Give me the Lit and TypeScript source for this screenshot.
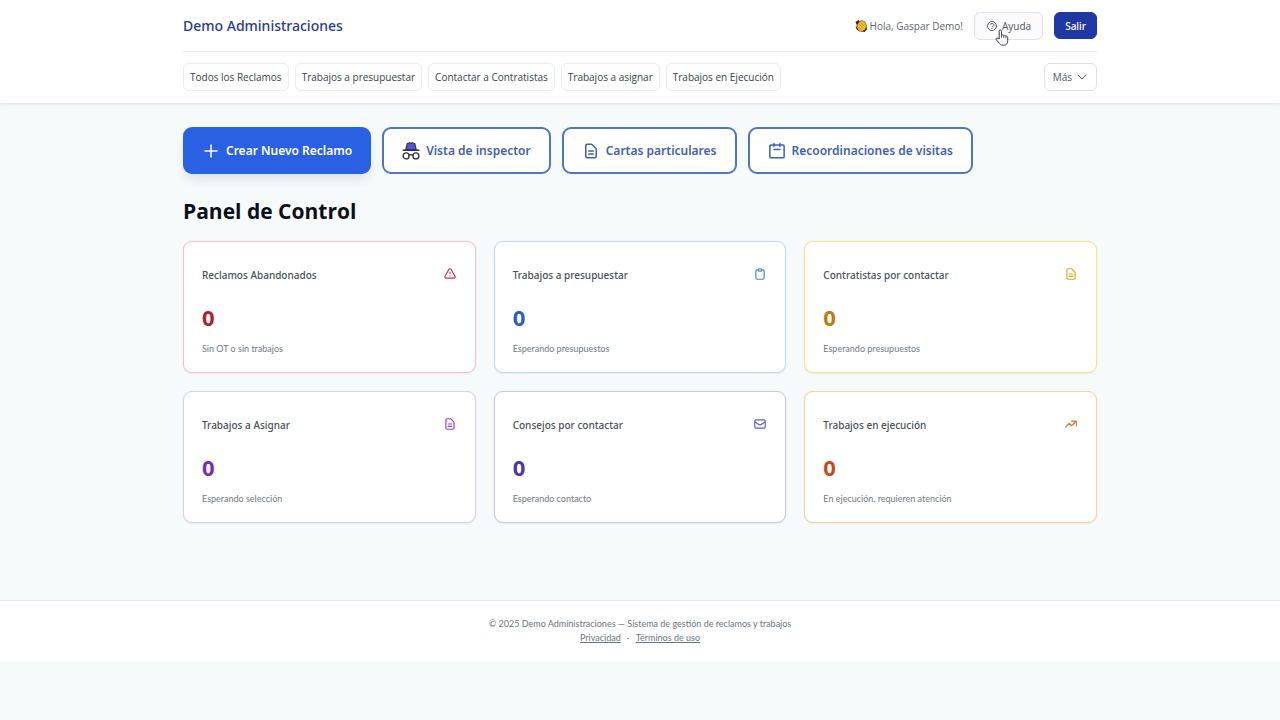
import { LitElement, html, css, svg } from "lit";
import { customElement } from "lit/decorators.js";

const icons = {
  warning: svg`<path d="M12 9v2m0 4h.01m-6.938 4h13.856c1.54 0 2.502-1.667 1.732-3L13.732 4c-.77-1.333-2.694-1.333-3.464 0L3.34 16c-.77 1.333.192 3 1.732 3z"/>`,
  clipboard: svg`<path d="M9 5H7a2 2 0 00-2 2v12a2 2 0 002 2h10a2 2 0 002-2V7a2 2 0 00-2-2h-2M9 5a2 2 0 002 2h2a2 2 0 002-2M9 5a2 2 0 012-2h2a2 2 0 012 2"/>`,
  document: svg`<path d="M9 12h6m-6 4h6m2 5H7a2 2 0 01-2-2V5a2 2 0 012-2h5.586a1 1 0 01.707.293l5.414 5.414a1 1 0 01.293.707V19a2 2 0 01-2 2z"/>`,
  mail: svg`<path d="M3 8l7.89 5.26a2 2 0 002.22 0L21 8M5 19h14a2 2 0 002-2V7a2 2 0 00-2-2H5a2 2 0 00-2 2v10a2 2 0 002 2z"/>`,
  trend: svg`<path d="M13 7h8m0 0v8m0-8l-8 8-4-4-6 6"/>`,
  plus: svg`<path d="M12 4v16m8-8H4"/>`,
  calendar: svg`<path d="M8 2v4m8-4v4M8 10h8M4 21h16a1.5 1.5 0 001.5-1.5v-14A1.5 1.5 0 0020 4H4a1.5 1.5 0 00-1.5 1.5v14A1.5 1.5 0 004 21z"/>`,
  help: svg`<path d="M8.228 9c.549-1.165 2.03-2 3.772-2 2.21 0 4 1.343 4 3 0 1.4-1.278 2.575-3.006 2.907-.542.104-.994.54-.994 1.093m0 3h.01M21 12a9 9 0 11-18 0 9 9 0 0118 0z"/>`,
  chevron: svg`<path d="M4 8l8 8 8-8"/>`,
};

const icon = (name: keyof typeof icons) =>
  html`<svg class="icon" viewBox="0 0 24 24" aria-hidden="true">${icons[name]}</svg>`;

const navLinks = [
  "Todos los Reclamos",
  "Trabajos a presupuestar",
  "Contactar a Contratistas",
  "Trabajos a asignar",
  "Trabajos en Ejecución",
];

const cards: { title: string; note: string; icon: keyof typeof icons; tone: string }[] = [
  { title: "Reclamos Abandonados", note: "Sin OT o sin trabajos", icon: "warning", tone: "red" },
  { title: "Trabajos a presupuestar", note: "Esperando presupuestos", icon: "clipboard", tone: "blue" },
  { title: "Contratistas por contactar", note: "Esperando presupuestos", icon: "document", tone: "yellow" },
  { title: "Trabajos a Asignar", note: "Esperando selección", icon: "document", tone: "purple" },
  { title: "Consejos por contactar", note: "Esperando contacto", icon: "mail", tone: "indigo" },
  { title: "Trabajos en ejecución", note: "En ejecución, requieren atención", icon: "trend", tone: "orange" },
];

@customElement("app-root")
export class AppRoot extends LitElement {
  static styles = css`
    :host {
      display: block;
      min-height: 100vh;
      background: #f7fafb;
      color: #0b0f19;
      font-family: "Open Sans", "Noto Sans", sans-serif;
      font-size: 10px;
      line-height: 14px;
    }
    * { box-sizing: border-box; }
    a { color: inherit; text-decoration: none; }
    button { font: inherit; cursor: pointer; }
    .wrap { max-width: 950px; margin: 0 auto; padding: 0 18px; }
    .icon {
      width: 14px;
      height: 14px;
      flex: none;
      fill: none;
      stroke: currentColor;
      stroke-width: 2;
      stroke-linecap: round;
      stroke-linejoin: round;
    }
    .brand, .exit, .action, .name { font-family: "Noto Sans", "Open Sans", sans-serif; }
    .header {
      background: #fff;
      box-shadow: 0 1px 3px rgba(30, 50, 60, 0.12);
    }
    .top {
      display: flex;
      align-items: center;
      justify-content: space-between;
      height: 52px;
      border-bottom: 1px solid #e9ebee;
    }
    .brand { color: #283c8f; font-size: 14px; line-height: 20px; font-weight: 500; }
    .account { display: flex; align-items: center; gap: 11px; }
    .hello { display: flex; align-items: center; gap: 3px; color: #5f646c; }
    .wave { width: 12px; height: 12px; }
    .btn {
      position: relative;
      display: flex;
      align-items: center;
      gap: 4px;
      height: 28px;
      padding: 0 11px;
      border: 1px solid #dfe1e6;
      border-radius: 6px;
      background: #fff;
      color: #51565e;
    }
    .btn .icon { width: 12px; height: 12px; }
    .help { background: #fafafc; }
    .exit { height: 27px; padding: 0 10px; border-color: #2038a3; background: #2038a3; color: #fff; font-weight: 500; }
    .more { padding: 0 8px; }
    .pointer {
      position: absolute;
      left: 20px;
      top: 16px;
      width: 14px;
      height: 17px;
    }
    .nav {
      display: flex;
      align-items: center;
      justify-content: space-between;
      padding: 11px 0 12px;
    }
    .links { display: flex; gap: 6px; }
    .link {
      height: 28px;
      padding: 6px;
      border: 1px solid #ececef;
      border-radius: 6px;
      background: #fefefe;
      color: #3a3f47;
    }
    .link, .btn { white-space: nowrap; }
    .actions { display: flex; flex-wrap: wrap; gap: 11px; padding-top: 24px; }
    .action {
      display: flex;
      align-items: center;
      gap: 6px;
      height: 47px;
      padding: 0 18px;
      border: 2px solid #5075c4;
      border-radius: 9px;
      background: #fff;
      color: #3f5fb2;
      font-size: 12px;
      line-height: 20px;
      font-weight: 600;
    }
    .action .icon { width: 18px; height: 18px; }
    .primary {
      padding: 0 17px;
      border-color: #2a60e2;
      background: #2a60e2;
      color: #fff;
      box-shadow: 0 7px 11px -2px rgba(20, 30, 50, 0.12);
    }
    .title { margin: 22px 0 14px; font-size: 21px; line-height: 31px; font-weight: 700; }
    .grid { display: grid; grid-template-columns: repeat(3, 1fr); gap: 18px; }
    .card {
      height: 132px;
      padding: 25px 18px 0;
      border: 1px solid var(--line);
      border-radius: 9px;
      background: #fff;
      box-shadow: 0 0 1px var(--line), 0 1px 2px rgba(0, 0, 0, 0.05);
    }
    .head { display: flex; align-items: flex-start; justify-content: space-between; height: 17px; }
    .name { margin: 0; color: #4a5058; font-size: 10px; line-height: 17px; font-weight: 500; }
    .head .icon { color: var(--mark); }
    .count { margin: 20px 0 0; color: var(--ink); font-size: 22px; line-height: 26px; font-weight: 700; }
    .note { margin: 13px 0 0; color: #71777f; font-family: "Lato", sans-serif; font-size: 9px; line-height: 12px; }
    .red { --line: #f2c3c9; --mark: #c23448; --ink: #b01c2e; }
    .blue { --line: #bfdcea; --mark: #3c88bd; --ink: #2c5cc4; }
    .yellow { --line: #f3e392; --mark: #d9a420; --ink: #bb7a12; }
    .purple { --line: #ddd0ec; --mark: #9345c6; --ink: #7a28bd; }
    .indigo { --line: #c6cbe8; --mark: #6259b8; --ink: #4a37a8; }
    .orange { --line: #f6d3a6; --mark: #d9702e; --ink: #c04e1c; }
    .footer {
      margin-top: 77px;
      padding: 16px 18px 17px;
      border-top: 1px solid #e6e9ec;
      background: #fff;
      color: #6d737b;
      text-align: center;
      font-family: "Lato", sans-serif;
      font-size: 9px;
      line-height: 14px;
    }
    .footer p { margin: 0; }
    .legal { text-decoration: underline; }
    .dot { margin: 0 4px; }
  `;

  render() {
    return html`
      <header class="header">
        <div class="wrap">
          <div class="top">
            <a class="brand" href="#">Demo Administraciones</a>
            <div class="account">
              <span class="hello">
                <svg class="wave" viewBox="0 0 24 24" aria-hidden="true">
                  <path d="M1 4l6-4 3 3-6 8zM1 13l4 1 4 8-5-2zM23 14l1 5-5 5-5-1z" fill="#2e2c20"/>
                  <path d="M4 10l5-7 5-2 6 3 3 7-2 8-7 4-6-1-4-6z" fill="#f2b92c" stroke="#4b3d14" stroke-width="1.2"/>
                  <path d="M8 8l7 7M12 5l6 7M7 14l5 4" fill="none" stroke="#b8841a" stroke-width="1.2"/>
                </svg>
                Hola, Gaspar Demo!
              </span>
              <button class="btn help" type="button">
                ${icon("help")} Ayuda
                <svg class="pointer" viewBox="0 0 14 17" aria-hidden="true">
                  <path d="M4.2 10V2.2c0-1.8 2.3-1.8 2.3 0v4.2c.4-.8 2-.7 2.2.3.5-.6 1.9-.4 2.1.6.7-.4 1.9 0 1.9 1.2v3.2c0 2.6-1.3 4.5-3.8 4.5H7.5c-1.5 0-2.3-.6-3-1.7L1.3 10.8c-.8-1.3.6-2.3 1.6-1.5z" fill="#fff" stroke="#3c3c3c" stroke-width="1"/>
                  <path d="M6.5 6.4v2.4M8.7 7v1.9M10.8 7.5v1.7" stroke="#3c3c3c" stroke-width=".8"/>
                </svg>
              </button>
              <button class="btn exit" type="button">Salir</button>
            </div>
          </div>
          <nav class="nav">
            <div class="links">
              ${navLinks.map((label) => html`<a class="link" href="#">${label}</a>`)}
            </div>
            <button class="btn more" type="button">Más ${icon("chevron")}</button>
          </nav>
        </div>
      </header>

      <main class="wrap">
        <div class="actions">
          <button class="action primary" type="button">${icon("plus")} Crear Nuevo Reclamo</button>
          <button class="action" type="button">
            <svg class="icon" viewBox="0 0 24 24" aria-hidden="true">
              <path d="M5 10L7 2l3.5-1 1.5 1 1.5-1 3.5 1L19 10z" fill="#5655c8" stroke="#2c2a63" stroke-width="1.4"/>
              <path d="M1.5 11h21" stroke="#2c2a63" stroke-width="1.8"/>
              <g stroke="#30303c" stroke-width="1.8">
                <circle cx="5.5" cy="18.5" r="4"/>
                <circle cx="18.5" cy="18.5" r="4"/>
                <path d="M9.5 17.5q2.5-1.5 5 0"/>
              </g>
            </svg>
            Vista de inspector
          </button>
          <button class="action" type="button">${icon("document")} Cartas particulares</button>
          <button class="action" type="button">${icon("calendar")} Recoordinaciones de visitas</button>
        </div>

        <h1 class="title">Panel de Control</h1>

        <div class="grid">
          ${cards.map(
            (card) => html`
              <article class="card ${card.tone}">
                <div class="head">
                  <h2 class="name">${card.title}</h2>
                  ${icon(card.icon)}
                </div>
                <p class="count">0</p>
                <p class="note">${card.note}</p>
              </article>
            `
          )}
        </div>
      </main>

      <footer class="footer">
        <p>© 2025 Demo Administraciones — Sistema de gestión de reclamos y trabajos</p>
        <p>
          <a class="legal" href="#">Privacidad</a><span class="dot"> · </span><a class="legal" href="#">Términos de uso</a>
        </p>
      </footer>
    `;
  }
}
